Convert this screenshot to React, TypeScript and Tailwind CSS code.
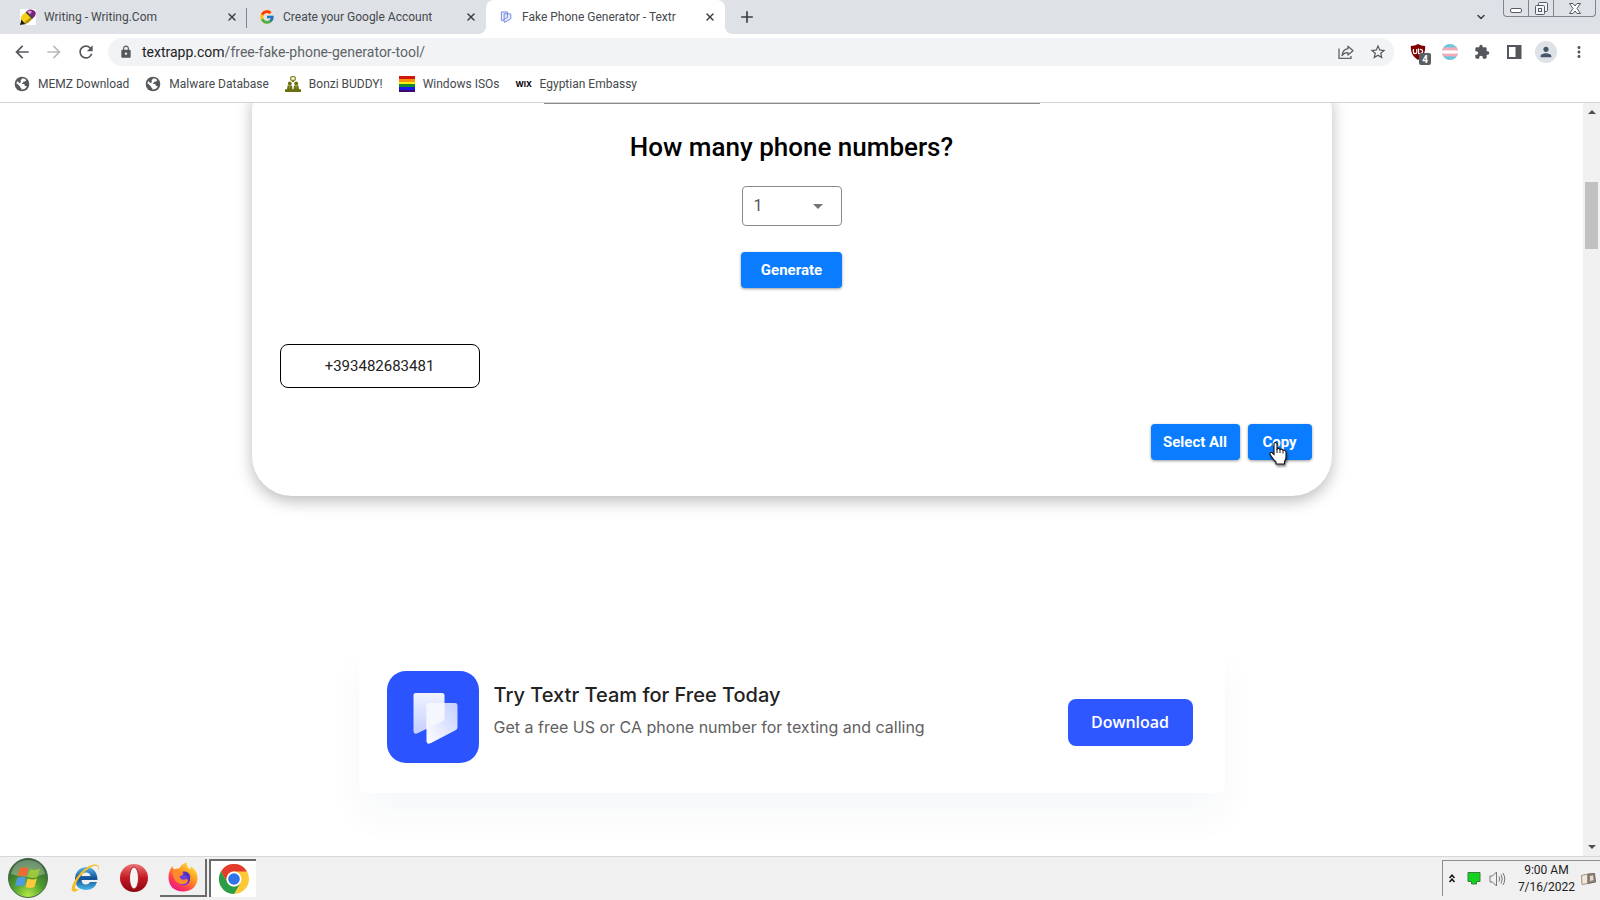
import { MdArrowBack, MdArrowForward, MdRefresh, MdLock, MdExtension, MdPerson, MdMoreVert, MdStarBorder, MdArrowDropDown, MdAdd } from "react-icons/md";
import { FcGoogle } from "react-icons/fc";
import { ChevronDown, X } from "lucide-react";

const PencilIcon = () => (
    <svg viewBox="0 0 16 16" className="w-4 h-4 shrink-0">
        <rect width="16" height="16" fill="#fff" />
        <path d="M0 16 L1.5 10 L6.5 15 Z" fill="#1b1b1b" />
        <path d="M1 10 Q0.500 7.500 2.500 5.800 L6 3 L12.5 9.5 L8.5 13.5 Q7 15 4.500 14.2 Z" fill="#f5d211" />
        <path d="M4 13.500 L11 8 L12.5 9.5 L7.5 14.200 Z" fill="#b98a06" />
        <path d="M6 3 L8.5 0.8 Q13.5 -0.5 15.5 3 Q16.2 5.6 14.6 7.6 L12.5 9.5 Z" fill="#7c1f7e" />
        <path d="M7 3 L9 1.4 L12 2.5 L10 5.5 Z" fill="#e59ad0" />
        <path d="M5.6 3.4 L12 10 L13.2 8.8 L7 2.4 Z" fill="#4a3f52" />
    </svg>
);

const TextrFavicon = () => (
    <svg viewBox="0 0 12 13" className="w-3 h-3 shrink-0" fill="#e8edff" stroke="#6d82d8" strokeWidth="1">
        <path d="M1 1 H7.500 V8 L1.5 10.5 Q1 10.500 1 10 Z" />
        <path d="M4 3 H10.500 Q11.200 3 11.200 4 V8.5 L4.5 12.3 Q4 12.300 4 12 Z" fill="#e6ebff" />
        <path d="M4.5 8.500 L7.500 7 V3" fill="none" />
    </svg>
);

const GlobeIcon = () => (
    <svg viewBox="0 0 16 16" className="w-4 h-4 shrink-0">
        <circle cx="8" cy="8" r="7.300" fill="#55585c" />
        <path d="M7.800 2.600 Q10.500 2.200 12 3.800 Q12.300 5 11 5.400 L9.500 5.600 Q9.600 7 8.200 7.200 L7.800 8 H10.200 Q11 8.800 10.800 10 H12.200 Q12.900 10.300 12.600 11 Q10.800 13.800 7.400 13.600 V12.400 Q6.200 12 6.200 10.800 L3 7.400 Q2.500 8.500 3 10 Q1.800 7 3.200 5 L5.600 7.200 Q7 6.800 6.800 5.600 L6.600 4.200 Q7.800 4 7.800 2.600 Z" fill="#fff" />
    </svg>
);

const BonziIcon = () => (
    <svg viewBox="0 0 16 16" className="w-4 h-4 shrink-0" fill="#6b6e10">
        <rect x="5.600" y="0.700" width="4.800" height="3.600" rx="1.600" fill="#fff" stroke="#85891c" strokeWidth="1.3" />
        <path d="M7 4.800 H9 V6 H7 Z" />
        <circle cx="4.800" cy="7.500" r="1.900" />
        <circle cx="11.200" cy="7.500" r="1.900" />
        <path d="M2.600 9.500 H7 L7.400 13.200 H8.600 L9 9.500 H13.400 L14 13.200 H16 V16 H0 V13.200 H2 Z" />
        <path d="M4.800 10 V12.500 M11.200 10 V12.500" stroke="#a9ab55" strokeWidth="0.7" />
    </svg>
);

const FlagIcon = () => (
    <svg viewBox="0 0 16 16" className="w-4 h-4 shrink-0">
        <rect width="16" height="3" fill="#d3150f" />
        <rect y="3" width="16" height="3" fill="#f9950a" />
        <rect y="6" width="16" height="2" fill="#f8ee0c" />
        <rect y="8" width="16" height="3" fill="#178a2c" />
        <rect y="11" width="16" height="3" fill="#1717ea" />
        <rect y="14" width="16" height="2" fill="#3c0a6b" />
    </svg>
);

const ShareIcon = () => (
    <svg viewBox="0 0 16 16" className="w-4 h-4" fill="none" stroke="#5f6368" strokeWidth="1.3">
        <path d="M1 4.500 V14.4 H13 V12" />
        <path d="M10 2.2 L15 6.7 L10 11 V8.7 Q6 8.5 4 11.6 Q4.6 5.4 10 4.7 Z" strokeLinejoin="round" />
    </svg>
);

const ShieldIcon = () => (
    <svg viewBox="0 0 16 16" className="w-4 h-4">
        <path d="M8 0 Q11 1.8 15.2 2 Q16 11.5 8 16 Q0 11.5 0.8 2 Q5 1.8 8 0 Z" fill="#800000" />
        <path d="M3.4 5 V8 Q3.4 9.6 5 9.6 Q6.8 9.6 6.8 8 V5 M8.6 4.6 V9.6 H10 Q12.6 9.4 12.6 7.3 Q12.6 5.4 10 5.4" fill="none" stroke="#fff" strokeWidth="1.2" />
    </svg>
);

const StripedIcon = () => (
    <svg viewBox="0 0 16 16" className="w-4 h-4">
        <clipPath id="ball"><circle cx="8" cy="8" r="8" /></clipPath>
        <g clipPath="url(#ball)">
            <rect width="16" height="16" fill="#6cc6dc" />
            <rect y="3.4" width="16" height="9" fill="#f4abb9" />
            <rect y="6.4" width="16" height="3.2" fill="#fff" />
        </g>
    </svg>
);

const PanelIcon = () => (
    <svg viewBox="0 0 16 16" className="w-4 h-4">
        <rect x="2" y="2" width="12.5" height="12" fill="none" stroke="#54575b" strokeWidth="2" />
        <rect x="9.5" y="2" width="5" height="12" fill="#54575b" />
    </svg>
);

const TextrLogo = () => (
    <svg viewBox="0 0 92 92" className="w-[92px] h-[92px] shrink-0">
        <defs>
            <linearGradient id="back" x1="0" y1="0" x2="0" y2="1">
                <stop offset="0" stopColor="#f1f3ff" />
                <stop offset="1" stopColor="#c4ceff" />
            </linearGradient>
            <linearGradient id="front" x1="1" y1="0" x2="0" y2="1">
                <stop offset="0" stopColor="#c3cefe" />
                <stop offset="1" stopColor="#ffffff" />
            </linearGradient>
        </defs>
        <rect width="92" height="92" rx="19" fill="#2b54ff" />
        <path d="M28.5 22 H55 Q57.5 22 57.5 24.5 V47 Q57.5 49 56 50 L31 62 Q26.500 64 26.500 60 V24 Q26.500 22 28.500 22 Z" fill="url(#back)" />
        <path d="M41.500 32 H68 Q70.500 32 70.500 34.500 V56 Q70.500 58 69 59 L44 72 Q39.500 74 39.500 70 V34 Q39.500 32 41.500 32 Z" fill="url(#front)" />
        <path d="M41.500 32 H57.500 V47 Q57.500 49 56 50 L39.500 58 V34 Q39.500 32 41.500 32 Z" fill="#f5f7ff" />
    </svg>
);

const HandCursor = () => (
    <svg viewBox="0 0 18 24" className="absolute left-[21px] top-[17px] w-[18px] h-6 pointer-events-none drop-shadow-[1px_2px_1px_rgba(0,0,0,0.5)]">
        <path d="M5 2.500 Q6.500 0.500 8 2.500 V8 Q9.500 6.800 11 8.400 Q12.600 7.500 14 9.200 Q16.600 8.700 17 11 V16 Q17 19 15.500 20.500 V23 H7 V21 Q4 18.500 2.500 15.500 L0.800 13 Q1 10.800 3.200 11.800 L5 13.500 Z" fill="#fff" stroke="#111" strokeWidth="1.1" />
        <path d="M8 8 V12 M11 8.600 V12 M14 9.400 V12.500" stroke="#111" strokeWidth="1" />
    </svg>
);

const StartOrb = () => (
    <svg viewBox="0 0 40 40" className="w-10 h-10">
        <defs>
            <radialGradient id="orb" cx="0.5" cy="0.95" r="0.9">
                <stop offset="0" stopColor="#b4e84a" />
                <stop offset="0.45" stopColor="#4f9e2c" />
                <stop offset="1" stopColor="#2d5a34" />
            </radialGradient>
        </defs>
        <circle cx="20" cy="20" r="19.500" fill="url(#orb)" stroke="#47694a" />
        <path d="M3 16 Q6 2 20 2 Q34 2 37 16 Q20 22 3 16 Z" fill="#fff" opacity="0.3" />
        <path d="M11.500 10.500 Q16 8 20.500 10.500 L18.500 18.500 Q14 16.500 9.500 18.500 Z" fill="#ee6a35" />
        <path d="M22 11.200 Q27 13 32 10.500 L29.500 19 Q25 21 20 19 Z" fill="#9cc93b" />
        <path d="M9 20 Q13.500 18 18 20 L16 28.500 Q11.500 26.500 7 28.500 Z" fill="#4f9be0" />
        <path d="M19.500 20.500 Q24.500 22.500 29 20.500 L26.500 29 Q22 31 17.500 29 Z" fill="#fbc93b" />
    </svg>
);

const ExplorerIcon = () => (
    <svg viewBox="0 0 30 30" className="w-[30px] h-[30px]">
        <defs>
            <linearGradient id="ie" x1="0" y1="0" x2="0" y2="1">
                <stop offset="0" stopColor="#5bb8ee" />
                <stop offset="0.5" stopColor="#124f96" />
                <stop offset="1" stopColor="#49b9e8" />
            </linearGradient>
        </defs>
        <path d="M27 19 Q24.500 27 16 27 Q5 26.500 5 15.500 Q6 4.500 16 4 Q27 4.500 27.500 17 H11.500 Q12 21.500 16 21.500 Q18.500 21.500 20 19 Z M11.500 13 H20.500 Q20 9.500 16 9.500 Q12 9.500 11.500 13 Z" fill="url(#ie)" fillRule="evenodd" />
        <path d="M28 9 Q31 1 24 1.500 Q15 3 7 14 Q-1 26 3 28.500 Q5 29.500 10 26 Q5.500 27.500 5 24.500 Q6 17 15 8.500 Q23 1.500 27 3 Q29 4 28 9 Z" fill="#f2bd25" />
    </svg>
);

const OperaIcon = () => (
    <svg viewBox="0 0 28 28" className="w-7 h-7">
        <defs>
            <linearGradient id="opera" x1="0" y1="0" x2="0" y2="1">
                <stop offset="0" stopColor="#ee7474" />
                <stop offset="0.5" stopColor="#c41822" />
                <stop offset="1" stopColor="#8d0811" />
            </linearGradient>
        </defs>
        <ellipse cx="14" cy="14" rx="14" ry="14" fill="url(#opera)" />
        <ellipse cx="14" cy="14" rx="4.500" ry="11" fill="#f7f3f3" stroke="#97131b" strokeWidth="0.8" />
    </svg>
);

const FirefoxIcon = () => (
    <svg viewBox="0 0 30 30" className="w-[30px] h-[30px]">
        <defs>
            <linearGradient id="fox" x1="0.85" y1="0.05" x2="0.2" y2="0.95">
                <stop offset="0" stopColor="#ffe53b" />
                <stop offset="0.45" stopColor="#ff8a1f" />
                <stop offset="0.75" stopColor="#ff3b50" />
                <stop offset="1" stopColor="#e8168a" />
            </linearGradient>
        </defs>
        <path d="M19 0.500 Q18 4 21.500 7 Q23.500 6.500 22.500 4 Q30 9 29.500 17 Q28 29 15 29.500 Q1.500 29 0.500 16 Q0.500 9 4.500 4 Q4.500 6.500 6 7.500 Q8.500 6 11 6.500 Q14 1.500 19 0.500 Z" fill="url(#fox)" />
        <circle cx="15.500" cy="17" r="6.500" fill="#6b3ee0" />
        <path d="M4 8 Q9 6 11.500 9.500 L15.500 11 Q15 13.500 11.500 14 Q12 18.500 17 17.500 Q20 16.500 20.500 18.500 Q18 23 12.500 22 Q6 20 5 13 Z" fill="#ff8a2b" />
        <path d="M15 9.500 Q20.500 9 22 13.500 Q23 19 19 22 Q21 18 18.500 14 Q15 13 15 9.500 Z" fill="#5430bd" />
    </svg>
);

const ChromeIcon = () => (
    <svg viewBox="0 0 30 30" className="w-[30px] h-[30px]">
        <circle cx="15" cy="15" r="15" fill="#fcc934" />
        <path d="M2 7.500 A15 15 0 0 1 28 7.500 H15 A7.500 7.500 0 0 0 8.500 18.750 Z" fill="#e33b2e" />
        <path d="M2 7.500 A15 15 0 0 0 15 30 L21.500 18.750 A7.500 7.500 0 0 1 8.500 18.750 Z" fill="#2a9d4b" />
        <circle cx="15" cy="15" r="7.500" fill="#fff" />
        <circle cx="15" cy="15" r="5.800" fill="#2f73e8" />
    </svg>
);

const tabs = [
    { title: "Writing - Writing.Com", icon: <PencilIcon />, active: false },
    { title: "Create your Google Account", icon: <FcGoogle className="w-4 h-4 shrink-0" />, active: false },
    { title: "Fake Phone Generator - Textr", icon: <TextrFavicon />, active: true },
];

const bookmarks = [
    { name: "MEMZ Download", icon: <GlobeIcon /> },
    { name: "Malware Database", icon: <GlobeIcon /> },
    { name: "Bonzi BUDDY!", icon: <BonziIcon /> },
    { name: "Windows ISOs", icon: <FlagIcon /> },
    { name: "Egyptian Embassy", icon: <span className="w-4 text-center font-['Inter',sans-serif] text-[8px] font-bold text-black">WIX</span> },
];

function TabStrip() {
    return (
        <div className="flex items-stretch justify-between h-[34px] bg-[#dee1e6] pl-2">
            <div className="flex">
                {tabs.map((tab, i) => (
                    <div
                        key={tab.title}
                        className={`relative flex items-center w-[239px] pl-3 pr-[7px] ${tab.active ? "bg-white rounded-t-lg" : ""}`}
                    >
                        {tab.active && (
                            <>
                                <span className="absolute -left-2 bottom-0 size-2 bg-[radial-gradient(circle_at_0_0,#dee1e6_8px,white_8px)]" />
                                <span className="absolute -right-2 bottom-0 size-2 bg-[radial-gradient(circle_at_100%_0,#dee1e6_8px,white_8px)]" />
                            </>
                        )}
                        <span className="flex justify-center w-4">{tab.icon}</span>
                        <span className="flex-1 pl-2 text-xs text-[#45494d] whitespace-nowrap">{tab.title}</span>
                        <button aria-label={`Close ${tab.title}`} className="flex items-center justify-center size-4 text-[#3c4043]">
                            <X className="size-3" strokeWidth={3} />
                        </button>
                        {i === 0 && <span className="absolute right-0 top-2 h-5 w-px bg-[#80868b]" />}
                    </div>
                ))}
                <button aria-label="New tab" className="flex items-center justify-center w-7 ml-2 text-[#3c4043]">
                    <MdAdd className="size-5" />
                </button>
            </div>
            <div className="flex items-start">
                <button aria-label="Search tabs" className="self-center mr-4 text-[#3c4043]">
                    <ChevronDown className="size-3" strokeWidth={3} />
                </button>
                <div className="flex h-[17px] mr-1 border border-t-0 border-[#80868c] rounded-b divide-x divide-[#80868c]">
                    <button aria-label="Minimize" className="flex items-end justify-center w-[25px] pb-[3px]">
                        <svg viewBox="0 0 12 5" className="w-3 h-[5px]"><rect x="0.5" y="0.5" width="11" height="4" rx="1.500" fill="#fff" stroke="#555a66" /></svg>
                    </button>
                    <button aria-label="Restore" className="flex items-center justify-center w-[25px]">
                        <svg viewBox="0 0 13 13" className="size-[13px]" fill="#f3f4f6" stroke="#555a66">
                            <rect x="3.500" y="0.500" width="9" height="9" rx="1" />
                            <rect x="0.500" y="3.500" width="9" height="9" rx="1" />
                            <rect x="3.500" y="6.500" width="3" height="3" />
                        </svg>
                    </button>
                    <button aria-label="Close window" className="flex items-center justify-center w-[41px]">
                        <svg viewBox="0 0 12 11" className="w-3 h-[11px]">
                            <path d="M0.500 0.500 H4 L6 3 L8 0.500 H11.500 L8 5.500 L11.500 10.500 H8 L6 8 L4 10.500 H0.500 L4 5.500 Z" fill="#fff" stroke="#555a66" />
                        </svg>
                    </button>
                </div>
            </div>
        </div>
    );
}

function Toolbar() {
    return (
        <div className="flex items-center h-9 pl-3 pr-3 bg-white text-[#54575b]">
            <button aria-label="Back" className="mr-3"><MdArrowBack className="size-5" /></button>
            <button aria-label="Forward" className="mr-3 text-[#b9bbbe]"><MdArrowForward className="size-5" /></button>
            <button aria-label="Reload" className="mr-3"><MdRefresh className="size-5" /></button>
            <div className="flex items-center flex-1 h-7 pl-[11px] pr-[7px] rounded-full bg-[#f1f3f4]">
                <MdLock className="size-3.5 mr-[9px]" />
                <div className="relative flex-1">
                    <input
                        aria-label="Address"
                        defaultValue="textrapp.com/free-fake-phone-generator-tool/"
                        className="block w-full h-5 text-sm leading-5 text-[#5f6368] bg-transparent outline-none"
                    />
                    <span className="absolute left-0 top-0 h-5 text-sm leading-5 text-[#202124] bg-[#f1f3f4] pointer-events-none" aria-hidden="true">textrapp.com</span>
                </div>
                <button aria-label="Share" className="mr-[15px]"><ShareIcon /></button>
                <button aria-label="Bookmark"><MdStarBorder className="size-[18px]" /></button>
            </div>
            <div className="flex items-center gap-4 pl-4">
                <button aria-label="uBlock" className="relative">
                    <ShieldIcon />
                    <span className="absolute left-[9px] top-[9px] flex items-center justify-center w-3 h-3 text-[10px] font-bold text-white bg-[#5b5e63] rounded-xs">4</span>
                </button>
                <button aria-label="Pride extension"><StripedIcon /></button>
                <button aria-label="Extensions"><MdExtension className="size-4" /></button>
                <button aria-label="Side panel"><PanelIcon /></button>
                <button aria-label="Profile" className="flex items-center justify-center size-[22px] -mx-[3px] rounded-full bg-[#dee1e6]">
                    <MdPerson className="size-4 text-[#44546b]" />
                </button>
                <button aria-label="Menu"><MdMoreVert className="size-[18px]" /></button>
            </div>
        </div>
    );
}

function Bookmarks() {
    return (
        <nav className="flex items-center gap-4 h-[33px] pl-[14px] pb-2 pt-1 bg-white border-b border-[#d3d5d8]">
            {bookmarks.map((b) => (
                <a key={b.name} href="#" className="flex items-center gap-2 text-xs text-[#45494d] whitespace-nowrap">
                    {b.icon}
                    {b.name}
                </a>
            ))}
        </nav>
    );
}

function Generator() {
    const blue = "bg-[#0a7cff] text-white text-[15px] font-bold rounded h-9 shadow-[0_1px_3px_rgba(0,0,0,0.4)]";
    return (
        <section className="relative w-[1080px] max-w-full mx-auto -mt-8 pt-8 pb-9 px-5 bg-white rounded-[40px] shadow-[0_5px_16px_rgba(0,0,0,0.27)]">
            <div className="w-[496px] mx-auto border-t border-[#8a8a8a]" />
            <div className="flex flex-col items-center pt-[22px]">
                <label htmlFor="count" className="text-[26px] leading-[42px] font-medium text-black">How many phone numbers?</label>
                <div className="relative mt-[18px]">
                    <select id="count" className="appearance-none block w-[100px] h-10 pl-[11px] text-base text-[#555] bg-white border border-[#8a8a8a] rounded">
                        <option>1</option>
                    </select>
                    <MdArrowDropDown className="absolute right-3 top-2 size-6 text-[#757575] pointer-events-none" />
                </div>
                <button className={`${blue} w-[101px] mt-[26px]`}>Generate</button>
            </div>
            <div className="flex items-center justify-center w-[200px] h-11 ml-2 mt-14 text-[15px] text-[#222] border border-black rounded-lg">
                +393482683481
            </div>
            <div className="flex justify-end gap-2 mt-9">
                <button className={`${blue} w-[89px]`}>Select All</button>
                <button className={`${blue} relative w-16`}>
                    Copy
                    <HandCursor />
                </button>
            </div>
        </section>
    );
}

function Banner() {
    return (
        <section className="flex items-center w-[866px] max-w-full h-[152px] mx-auto mt-[145px] pl-7 pr-8 rounded-lg bg-white shadow-[0_24px_36px_rgba(40,60,90,0.035)]">
            <TextrLogo />
            <div className="flex-1 pl-[15px] pb-3 font-['Inter',sans-serif]">
                <h2 className="text-xl leading-8 font-medium text-[#222]">Try Textr Team for Free Today</h2>
                <p className="text-base leading-8 text-[#616161]">Get a free US or CA phone number for texting and calling</p>
            </div>
            <a href="#" className="flex items-center justify-center w-[125px] h-[47px] mt-2.5 text-white font-['Open_Sans',sans-serif] font-semibold rounded-lg bg-[#2f57ff]">Download</a>
        </section>
    );
}

function Scrollbar() {
    return (
        <div className="flex flex-col items-center justify-between w-[17px] py-1 bg-[#f1f1f1]" aria-hidden="true">
            <div className="flex flex-col items-center">
                <svg viewBox="0 0 8 4" className="w-2 h-1 mt-[3px]" fill="#505050"><path d="M0 4 L4 0 L8 4 Z" /></svg>
                <div className="w-[13px] h-[67px] mt-[68px] bg-[#c1c1c1]" />
            </div>
            <svg viewBox="0 0 8 4" className="w-2 h-1 mb-[3px]" fill="#505050"><path d="M0 0 L4 4 L8 0 Z" /></svg>
        </div>
    );
}

function Taskbar() {
    return (
        <footer className="flex items-stretch justify-between h-11 bg-[#f0f0f0] border-t border-[#d8d8d8]">
            <div className="flex items-center pb-px pl-2">
                <button aria-label="Start"><StartOrb /></button>
                <button aria-label="Internet Explorer" className="ml-[22px]"><ExplorerIcon /></button>
                <button aria-label="Opera" className="ml-5"><OperaIcon /></button>
                <button aria-label="Firefox" className="flex items-center justify-center w-[47px] h-[38px] ml-3 border-r-2 border-b-2 border-[#6b6b6b]"><FirefoxIcon /></button>
                <button aria-label="Chrome" className="flex items-center justify-center w-[47px] h-[38px] ml-0.5 bg-white border-l-2 border-t-2 border-[#6b6b6b]"><ChromeIcon /></button>
            </div>
            <div className="flex items-center mt-[3px] mb-1 pl-1.5 border-l border-t border-[#8d8d8d] text-xs text-[#222]">
                <svg viewBox="0 0 6 9" className="w-1.5 h-[9px]" fill="none" stroke="#111" strokeWidth="1.500"><path d="M0.500 4 L3 1.200 L5.500 4 M0.500 8 L3 5.200 L5.500 8" /></svg>
                <svg viewBox="0 0 14 13" className="w-3.5 h-[13px] ml-3"><path d="M1 0.500 H13 V9.500 H9.500 V12 H4.500 V9.500 H1 Z" fill="#12d41c" stroke="#3e7a42" /></svg>
                <svg viewBox="0 0 17 16" className="w-[17px] h-4 ml-2" fill="none" stroke="#777">
                    <path d="M1 5 H3.500 L7.500 1 V15 L3.500 11 H1 Z" />
                    <path d="M10 5.500 Q11.500 8 10 10.500 M12 3.500 Q14.500 8 12 12.500 M14 2 Q17.500 8 14 14" />
                </svg>
                <div className="ml-3 text-center leading-[17px]">
                    <div>9:00 AM</div>
                    <div>7/16/2022</div>
                </div>
                <svg viewBox="0 0 15 12" className="w-[15px] h-3 ml-1.5 mr-1">
                    <path d="M0.500 2.500 L7 1 V10.500 L1 11.500 Z" fill="#f2e7da" stroke="#a08f7d" />
                    <path d="M7 1 L13.500 0.500 L14.500 9 L7 10.500 Z" fill="#8f857b" stroke="#6e655d" />
                    <path d="M9 3 L12 2.600 L12.500 7 L9 8 Z" fill="#e3d9cf" />
                </svg>
            </div>
        </footer>
    );
}

export default function App() {
    return (
        <div className="flex flex-col h-screen overflow-hidden bg-white font-['Roboto',sans-serif]">
            <header>
                <TabStrip />
                <Toolbar />
                <Bookmarks />
            </header>
            <div className="flex flex-1 min-h-0">
                <main className="flex-1 min-w-0 overflow-hidden">
                    <Generator />
                    <Banner />
                </main>
                <Scrollbar />
            </div>
            <Taskbar />
        </div>
    );
}
